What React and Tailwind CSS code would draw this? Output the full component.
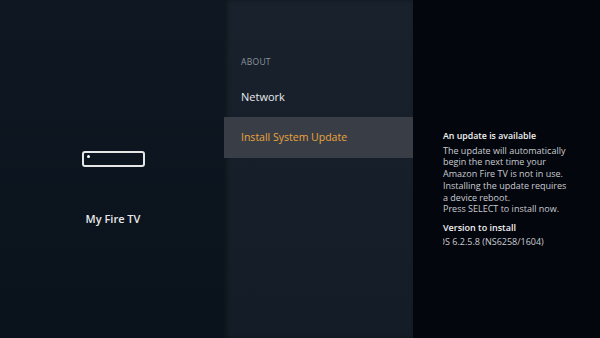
export default function App() {
  const font = { fontFamily: '"Open Sans", "Noto Sans", sans-serif' };
  return (
    <div
      className="flex w-[600px] h-[338px] overflow-hidden bg-[#05070f]"
      style={font}
    >
      {/* left: device */}
      <div className="w-[224px] h-full bg-gradient-to-b from-[#0f1722] to-[#0a121c] flex flex-col items-center pt-[151px] pl-[2px]">
        <div className="relative w-[63px] h-[16px] rounded-[3px] border-2 border-[#e6e6e6]">
          <div className="absolute left-[3px] top-[2px] w-[3px] h-[3px] rounded-full bg-white" />
        </div>
        <div className="mt-[45px] text-[11px] leading-[14px] font-semibold text-[#e8e8e8]">
          My Fire TV
        </div>
      </div>

      {/* middle: menu */}
      <div className="w-[189px] h-full bg-gradient-to-b from-[#18212c] to-[#141d27] flex flex-col pt-[56px] shadow-[inset_3px_0_4px_rgba(0,0,0,0.35)]">
        <div className="pl-[17px] text-[8.5px] leading-[12px] tracking-[0.3px] text-[#8e949b]">
          ABOUT
        </div>
        <div className="h-[40px] mt-[9px] flex items-center pl-[17px] text-[11px] text-[#e9eaeb]">
          Network
        </div>
        <div className="h-[41px] flex items-center pl-[17px] bg-[#393e46] text-[10.5px] text-[#eba43d]">
          Install System Update
        </div>
      </div>

      {/* right: details */}
      <div className="flex-1 h-full bg-[#04060d] pt-[131px] pl-[30px]">
        <div className="w-[150px] text-[9px] leading-[11.7px] text-[#c9ccd1]">
          <div className="font-semibold text-[#f2f2f2] text-[8.8px]">An update is available</div>
          <div className="mt-[2px]">
            The update will automatically
            <br />
            begin the next time your
            <br />
            Amazon Fire TV is not in use.
            <br />
            Installing the update requires
            <br />
            a device reboot.
            <br />
            Press SELECT to install now.
          </div>
          <div className="mt-[7px] font-semibold text-[#f2f2f2]">Version to install</div>
          <div className="mt-[2px] overflow-hidden whitespace-nowrap">
            <span className="inline-block -ml-[5px]">OS 6.2.5.8 (NS6258/1604)</span>
          </div>
        </div>
      </div>
    </div>
  );
}
